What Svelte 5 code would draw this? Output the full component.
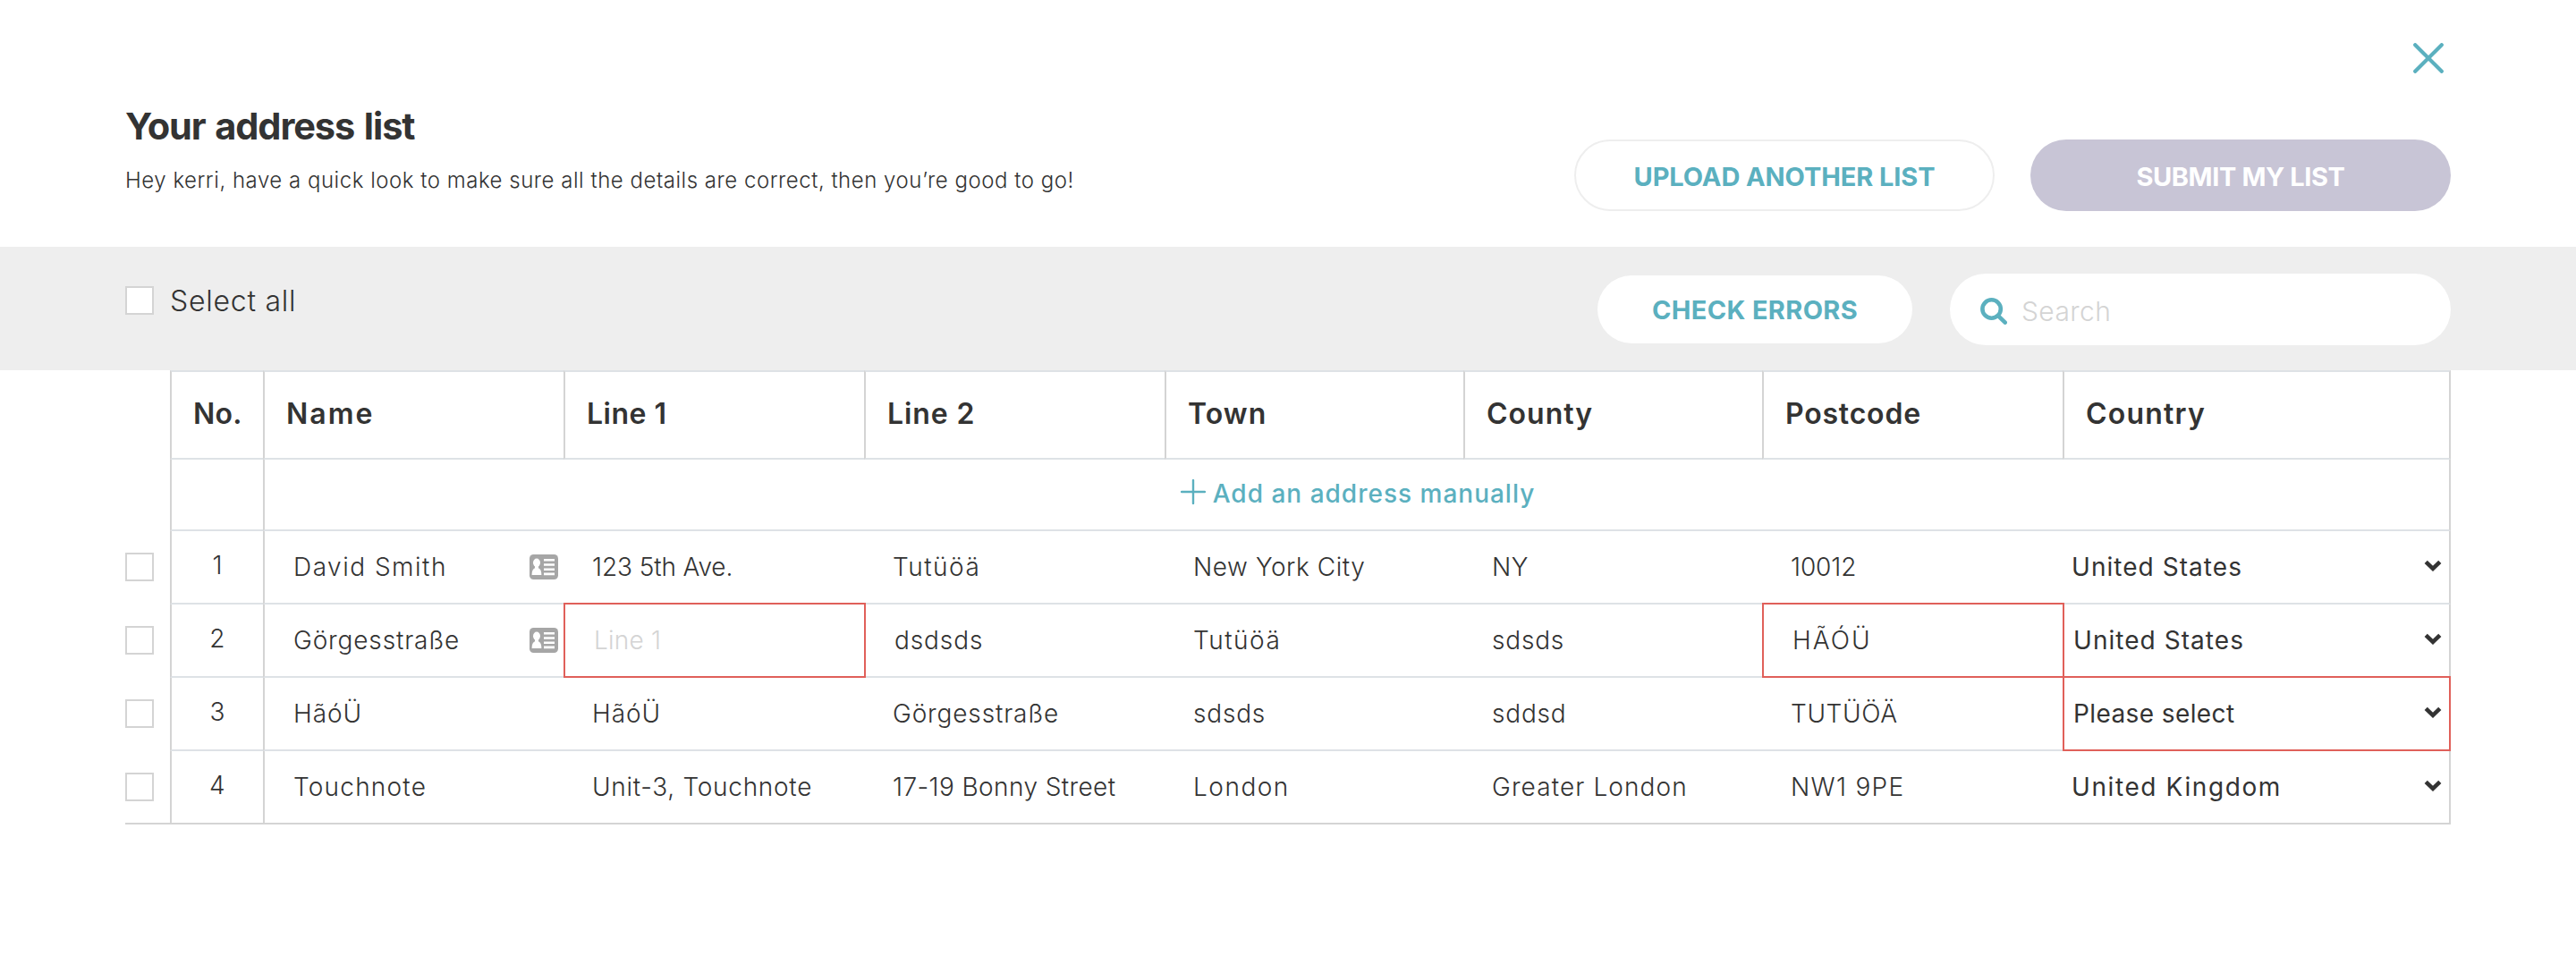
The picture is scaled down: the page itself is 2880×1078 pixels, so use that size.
<script>
  const columns = ['No.', 'Name', 'Line 1', 'Line 2', 'Town', 'County', 'Postcode', 'Country'];

  const rows = [
    { card: true, fields: ['David Smith', '123 5th Ave.', 'Tutüöä', 'New York City', 'NY', '10012'], country: 'United States' },
    { card: true, fields: ['Görgesstraße', '', 'dsdsds', 'Tutüöä', 'sdsds', 'HÃÓÜ'], country: 'United States', errors: [1, 5] },
    { fields: ['HãóÜ', 'HãóÜ', 'Görgesstraße', 'sdsds', 'sddsd', 'TUTÜÖÄ'], country: 'Please select', errors: [6] },
    { fields: ['Touchnote', 'Unit-3, Touchnote', '17-19 Bonny Street', 'London', 'Greater London', 'NW1 9PE'], country: 'United Kingdom' }
  ];

  const tracking = {
    'Name': 2, 'Line 1': 0.5, 'Line 2': 0.9, 'Town': 1.1, 'County': 1, 'Postcode': 0.8, 'Country': 1.2,
    'David Smith': 1.5, 'Görgesstraße': 0.85, 'Touchnote': 1.2, 'HãóÜ': 0.9,
    '123 5th Ave.': -0.1, 'Unit-3, Touchnote': 0.7, 'Tutüöä': 1.5, 'dsdsds': 0.9,
    '17-19 Bonny Street': 0.4, 'New York City': 0.55, 'sdsds': 0.8, 'London': 1.5,
    'NY': 0.6, 'sddsd': 0.8, 'Greater London': 1.1, 'HÃÓÜ': 2, 'TUTÜÖÄ': 0.6, 'NW1 9PE': 1.3,
    '10012': -0.1, 'United States': 1.05, 'Please select': 0.4, 'United Kingdom': 1.6
  };
  const track = (text) => `${tracking[text] ?? 0.2}px`;

  const hasError = (row, i) => row.errors?.includes(i) ?? false;
  // Columns bordered by an invalid cell on their left sit slightly further in.
  const isNudged = (row, i) => hasError(row, i) || hasError(row, i - 1);
</script>

<main>
  <header>
    <div class="close-row">
      <button class="close" aria-label="Close">
        <svg viewBox="0 0 34 34"><path d="M2.2 2.2 31.8 31.8M31.8 2.2 2.2 31.8" /></svg>
      </button>
    </div>
    <div class="heading">
      <div class="intro">
        <h1>Your address list</h1>
        <p>Hey kerri, have a quick look to make sure all the details are correct, then you’re good to go!</p>
      </div>
      <div class="actions">
        <button class="pill outline">UPLOAD ANOTHER LIST</button>
        <button class="pill submit">SUBMIT MY LIST</button>
      </div>
    </div>
  </header>

  <section class="toolbar">
    <label class="select-all"><span class="box"></span><span>Select all</span></label>
    <div class="tools">
      <button class="pill check">CHECK ERRORS</button>
      <div class="search">
        <svg viewBox="0 0 30 30"><circle cx="12.6" cy="12.5" r="10.2" /><path d="M20.2 20.3 27.7 27.6" /></svg>
        <span>Search</span>
      </div>
    </div>
  </section>

  <section class="table">
    <div class="row head">
      <div></div>
      {#each columns as column}
        <div class="cell" style:letter-spacing={track(column)}>{column}</div>
      {/each}
    </div>

    <div class="row add">
      <div></div>
      <div class="cell ruled"></div>
      <div class="cell ruled wide">
        <svg viewBox="0 0 28 28"><path d="M14 1V27M1 14H27" /></svg>
        <span>Add an address manually</span>
      </div>
    </div>

    {#each rows as row, n}
      <div class="row">
        <div class="tick"><span class="box"></span></div>
        <div class="cell ruled number">{n + 1}</div>
        {#each row.fields as field, i}
          <div class="cell" class:ruled={i === 0} class:nudged={isNudged(row, i)} class:error={hasError(row, i)}>
            {#if field}
              <span style:letter-spacing={track(field)}>{field}</span>
            {:else}
              <span class="placeholder">{columns[i + 1]}</span>
            {/if}
            {#if i === 0 && row.card}
              <svg class="card" viewBox="0 0 32 28">
                <rect width="32" height="28" rx="4.5" fill="#a6a6a6" />
                <ellipse cx="8" cy="9.3" rx="4" ry="4.8" fill="#fff" />
                <path d="M6 12h4v3.2c2.2 1 3.4 3.4 3.4 7.8H2.6c0-4.4 1.2-6.8 3.4-7.8z" fill="#fff" />
                <path d="M16 6.2h12M16 11.5h12M16 16.7h12M16 21.9h12" stroke="#fff" stroke-width="2.6" />
              </svg>
            {/if}
          </div>
        {/each}
        <div class="cell country" class:nudged={isNudged(row, 6)} class:error={hasError(row, 6)}>
          <span style:letter-spacing={track(row.country)}>{row.country}</span>
          <svg class="chevron" viewBox="0 0 20 14"><path d="M2.2 2.3 10 9.8 17.8 2.3" /></svg>
        </div>
      </div>
    {/each}
  </section>
</main>

<style>
  :global(body) {
    margin: 0;
    background: #fff;
  }

  main {
    width: 2880px;
    height: 1078px;
    overflow: hidden;
    box-sizing: border-box;
    color: #333;
    font-family: Inter, 'Liberation Sans', sans-serif;
    font-weight: 300;
  }

  main * {
    box-sizing: border-box;
  }

  button {
    padding: 0;
    border: 0;
    background: none;
    color: inherit;
    font: inherit;
  }

  svg {
    display: block;
    flex: none;
    fill: none;
    stroke-linecap: round;
  }

  header {
    height: 276px;
    padding: 48px 140px 0;
  }

  .close-row {
    display: flex;
    justify-content: flex-end;
    padding-right: 8px;
  }

  .close svg {
    width: 34px;
    height: 34px;
    stroke: #5bb0bf;
    stroke-width: 4.2;
  }

  .heading {
    display: flex;
    justify-content: space-between;
    padding-top: 33px;
  }

  h1 {
    margin: 0;
    font-size: 41.5px;
    font-weight: 700;
    line-height: 52px;
    letter-spacing: -1.1px;
    word-spacing: 2px;
  }

  p {
    margin: 17px 0 0;
    font-size: 24px;
    font-weight: 350;
    line-height: 36px;
    letter-spacing: 0.52px;
  }

  .actions {
    display: flex;
    gap: 40px;
    padding-top: 41px;
  }

  .pill {
    width: 470px;
    height: 80px;
    border-radius: 40px;
    font-size: 29px;
    font-weight: 700;
    color: #5bb0bf;
  }

  .outline {
    padding-top: 2px;
    border: 2px solid #eee;
    letter-spacing: -0.1px;
  }

  .submit {
    padding-top: 2px;
    background: #c8c5d6;
    color: #fff;
    letter-spacing: -0.4px;
  }

  .toolbar {
    display: flex;
    justify-content: space-between;
    height: 138px;
    padding: 30px 140px 0;
    background: #eee;
  }

  .select-all {
    display: flex;
    gap: 18px;
    height: 60px;
    align-items: center;
    font-size: 32px;
    letter-spacing: 0.75px;
  }

  .box {
    display: block;
    width: 32px;
    height: 32px;
    border: 2px solid #d4d4d4;
    background: #fff;
  }

  .tools {
    display: flex;
    gap: 42px;
    align-items: center;
    height: 80px;
  }

  .check {
    width: 352px;
    height: 76px;
    background: #fff;
    letter-spacing: 0.35px;
  }

  .search {
    display: flex;
    align-items: center;
    gap: 16px;
    width: 560px;
    height: 80px;
    padding: 3px 0 0 34px;
    border-radius: 40px;
    background: #fff;
    color: #d4d4d4;
    font-size: 30px;
    letter-spacing: 0.4px;
  }

  .search svg {
    width: 30px;
    height: 30px;
    stroke: #5bb0bf;
    stroke-width: 4.6;
  }

  .table {
    padding-left: 140px;
  }

  .row {
    display: grid;
    grid-template-columns: 50px 104px 336px 336px 336px 334px 334px 336px 434px;
    width: 2600px;
    height: 82px;
  }

  .cell {
    position: relative;
    display: flex;
    align-items: center;
    padding-left: 32px;
    border-bottom: 2px solid #dee2e6;
    font-size: 28px;
    letter-spacing: 0.2px;
    white-space: nowrap;
  }

  .cell:last-child {
    border-right: 2px solid #d4d4d4;
  }

  .ruled,
  .head .cell {
    border-left: 2px solid #d4d4d4;
  }

  .head {
    height: 100px;
  }

  .head .cell {
    padding: 0 0 3px 24px;
    border-top: 2px solid #dee2e6;
    font-size: 32px;
    font-weight: 600;
  }

  .add {
    height: 80px;
  }

  .add .wide {
    grid-column: 3 / -1;
    justify-content: center;
    gap: 8px;
    padding: 0 0 2px 2px;
    color: #5bb0bf;
    font-weight: 500;
    letter-spacing: 1px;
  }

  .add svg {
    width: 28px;
    height: 28px;
    margin-top: -4px;
    stroke: #5bb0bf;
    stroke-width: 2.4;
  }

  .tick {
    padding-top: 24px;
  }

  .cell.number {
    justify-content: center;
    padding: 0 0 5px;
  }

  .cell.nudged {
    padding-left: 34px;
  }

  .placeholder {
    color: #d4d4d4;
  }

  .card {
    width: 32px;
    height: 28px;
    margin: 0 6px 0 auto;
  }

  .card path {
    stroke-linecap: butt;
  }

  .cell.country {
    justify-content: space-between;
    padding: 0 8px 0 10px;
    font-weight: 400;
  }

  .cell.country.nudged {
    padding-left: 12px;
  }

  .chevron {
    width: 20px;
    height: 14px;
    margin-top: -2px;
    stroke: #333;
    stroke-width: 4.6;
    stroke-linecap: butt;
  }

  .error::after {
    content: '';
    position: absolute;
    inset: -2px -2px -2px 0;
    border: 2px solid #e0605a;
    z-index: 1;
  }

  .cell.country.error::after {
    inset: -2px -2px -2px 0;
  }

  .row:last-child > div {
    border-bottom: 2px solid #d4d4d4;
  }
</style>
